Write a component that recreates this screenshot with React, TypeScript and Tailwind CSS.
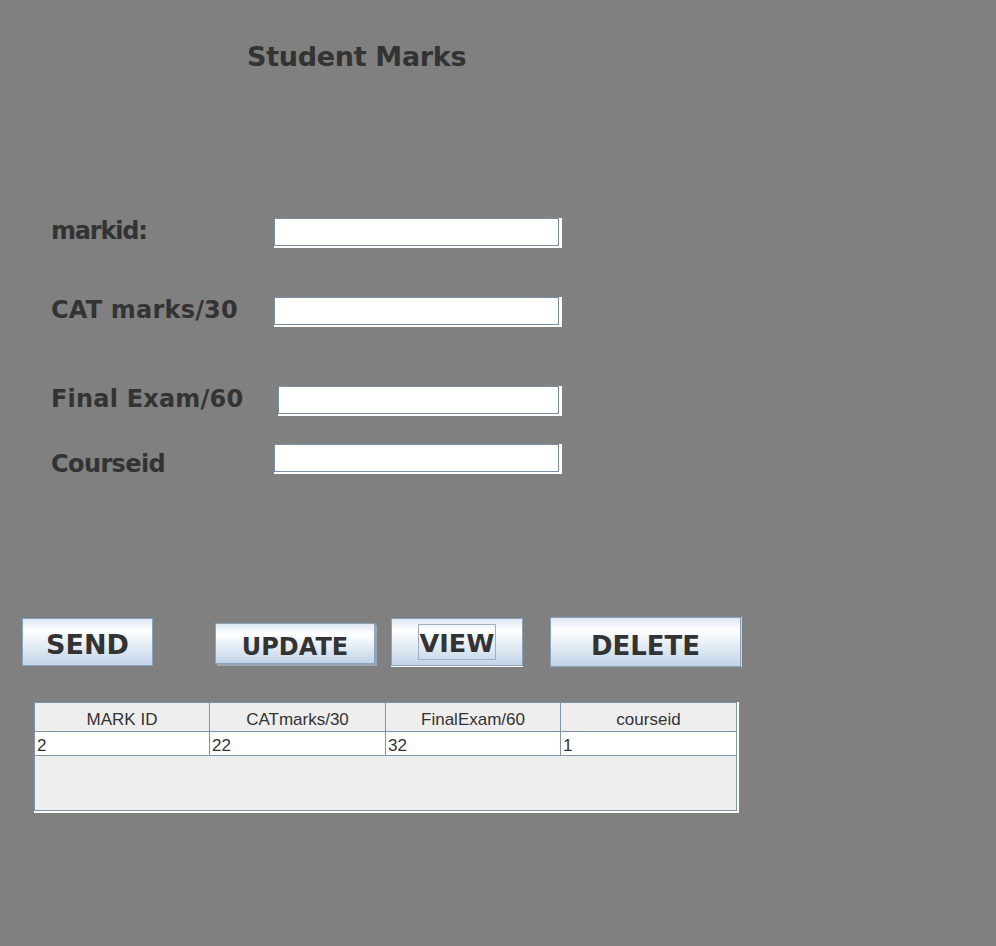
import React, { useState } from 'react';

const labelFont = "font-['DejaVu_Sans',sans-serif] font-bold text-[#333333]";
const tableFont = "font-['Liberation_Sans',Arial,sans-serif] text-[17px] text-[#333333]";

const btnBase =
  'flex items-center justify-center border border-[#8aa2bc] bg-gradient-to-b from-[#dde7f2] via-white via-25% to-[#c2d4e8] text-[#333333] leading-none ' +
  labelFont;

type Row = { markid: string; cat: string; final: string; course: string };

const Field = ({ value, onChange, w }: { value: string; onChange: (v: string) => void; w: string }) => (
  <div className={`bg-white pr-[3px] pb-[2px] h-[30px] ${w}`}>
    <input
      value={value}
      onChange={(e) => onChange(e.target.value)}
      className="w-full h-full bg-white border border-[#7b8ea3] outline-none px-1 text-sm"
    />
  </div>
);

const App = () => {
  const [markid, setMarkid] = useState('');
  const [cat, setCat] = useState('');
  const [finalExam, setFinalExam] = useState('');
  const [course, setCourse] = useState('');
  const [rows] = useState<Row[]>([{ markid: '2', cat: '22', final: '32', course: '1' }]);

  return (
    <div className="min-h-screen w-full bg-[#808080]">
      {/* titre */}
      <h1 className={`pt-[41px] pl-[247px] text-[27px] leading-[32px] tracking-[-0.3px] ${labelFont}`}>
        Student Marks
      </h1>

      {/* formulaire */}
      <div className="pl-[51px] mt-[143px]">
        <div className="flex items-start h-[32px]">
          <span className={`w-[223px] text-[24px] leading-[30px] tracking-[-1.2px] ${labelFont}`}>markid:</span>
          <div className="mt-[2px]">
            <Field value={markid} onChange={setMarkid} w="w-[288px]" />
          </div>
        </div>

        <div className="flex items-start h-[32px] mt-[47px]">
          <span className={`w-[223px] text-[24px] leading-[30px] tracking-[0.2px] ${labelFont}`}>CAT marks/30</span>
          <div className="mt-[2px]">
            <Field value={cat} onChange={setCat} w="w-[288px]" />
          </div>
        </div>

        <div className="flex items-start h-[32px] mt-[57px]">
          <span className={`w-[227px] text-[24px] leading-[30px] tracking-[0.2px] ${labelFont}`}>Final Exam/60</span>
          <div className="mt-[2px]">
            <Field value={finalExam} onChange={setFinalExam} w="w-[284px]" />
          </div>
        </div>

        <div className="flex items-start h-[35px] mt-[28px]">
          <span className={`w-[223px] mt-[5px] text-[24px] leading-[30px] tracking-[-0.6px] ${labelFont}`}>Courseid</span>
          <Field value={course} onChange={setCourse} w="w-[288px]" />
        </div>
      </div>

      {/* boutons */}
      <div className="flex items-start mt-[138px] h-[50px]">
        <button className={`${btnBase} ml-[22px] mt-[1px] w-[131px] h-[48px] pt-[5px] text-[27px]`}>SEND</button>
        <button
          className={`${btnBase} ml-[62px] mt-[6px] w-[160px] h-[41px] pt-[6px] text-[24px] shadow-[2px_2px_0_0_#9aa6b2]`}
        >
          UPDATE
        </button>
        <button className={`${btnBase} ml-[16px] mt-[1px] w-[132px] h-[48px] shadow-[0_1px_0_0_#ffffff]`}>
          <span className="flex items-center h-[36px] px-[1px] pt-[4px] border border-[#9fb0c4] text-[25.5px]">VIEW</span>
        </button>
        <button className={`${btnBase} ml-[27px] w-[191px] h-[50px] pt-[8px] text-[26px] shadow-[1px_0_0_0_#c9d3dd]`}>
          DELETE
        </button>
      </div>

      {/* tableau */}
      <div className="ml-[34px] mt-[35px] w-[705px] bg-white pr-[2px] pb-[2px]">
        <div className={`border border-[#8193a6] bg-[#eeeeee] ${tableFont}`}>
          <div className="grid grid-cols-[175px_176px_175px_175px]">
            {['MARK ID', 'CATmarks/30', 'FinalExam/60', 'courseid'].map((h, i) => (
              <div
                key={h}
                className={`h-[29px] pt-[7px] leading-[19px] text-center border-b border-[#8193a6] ${i < 3 ? 'border-r' : ''}`}
              >
                {h}
              </div>
            ))}
          </div>
          {rows.map((r) => (
            <div key={r.markid} className="grid grid-cols-[175px_176px_175px_175px] bg-white">
              {[r.markid, r.cat, r.final, r.course].map((c, i) => (
                <div
                  key={i}
                  className={`h-[24px] pt-[4px] pl-[2px] leading-[19px] border-b border-[#8193a6] ${i < 3 ? 'border-r' : ''}`}
                >
                  {c}
                </div>
              ))}
            </div>
          ))}
          <div className="h-[54px]" />
        </div>
      </div>
    </div>
  );
};

export default App;
